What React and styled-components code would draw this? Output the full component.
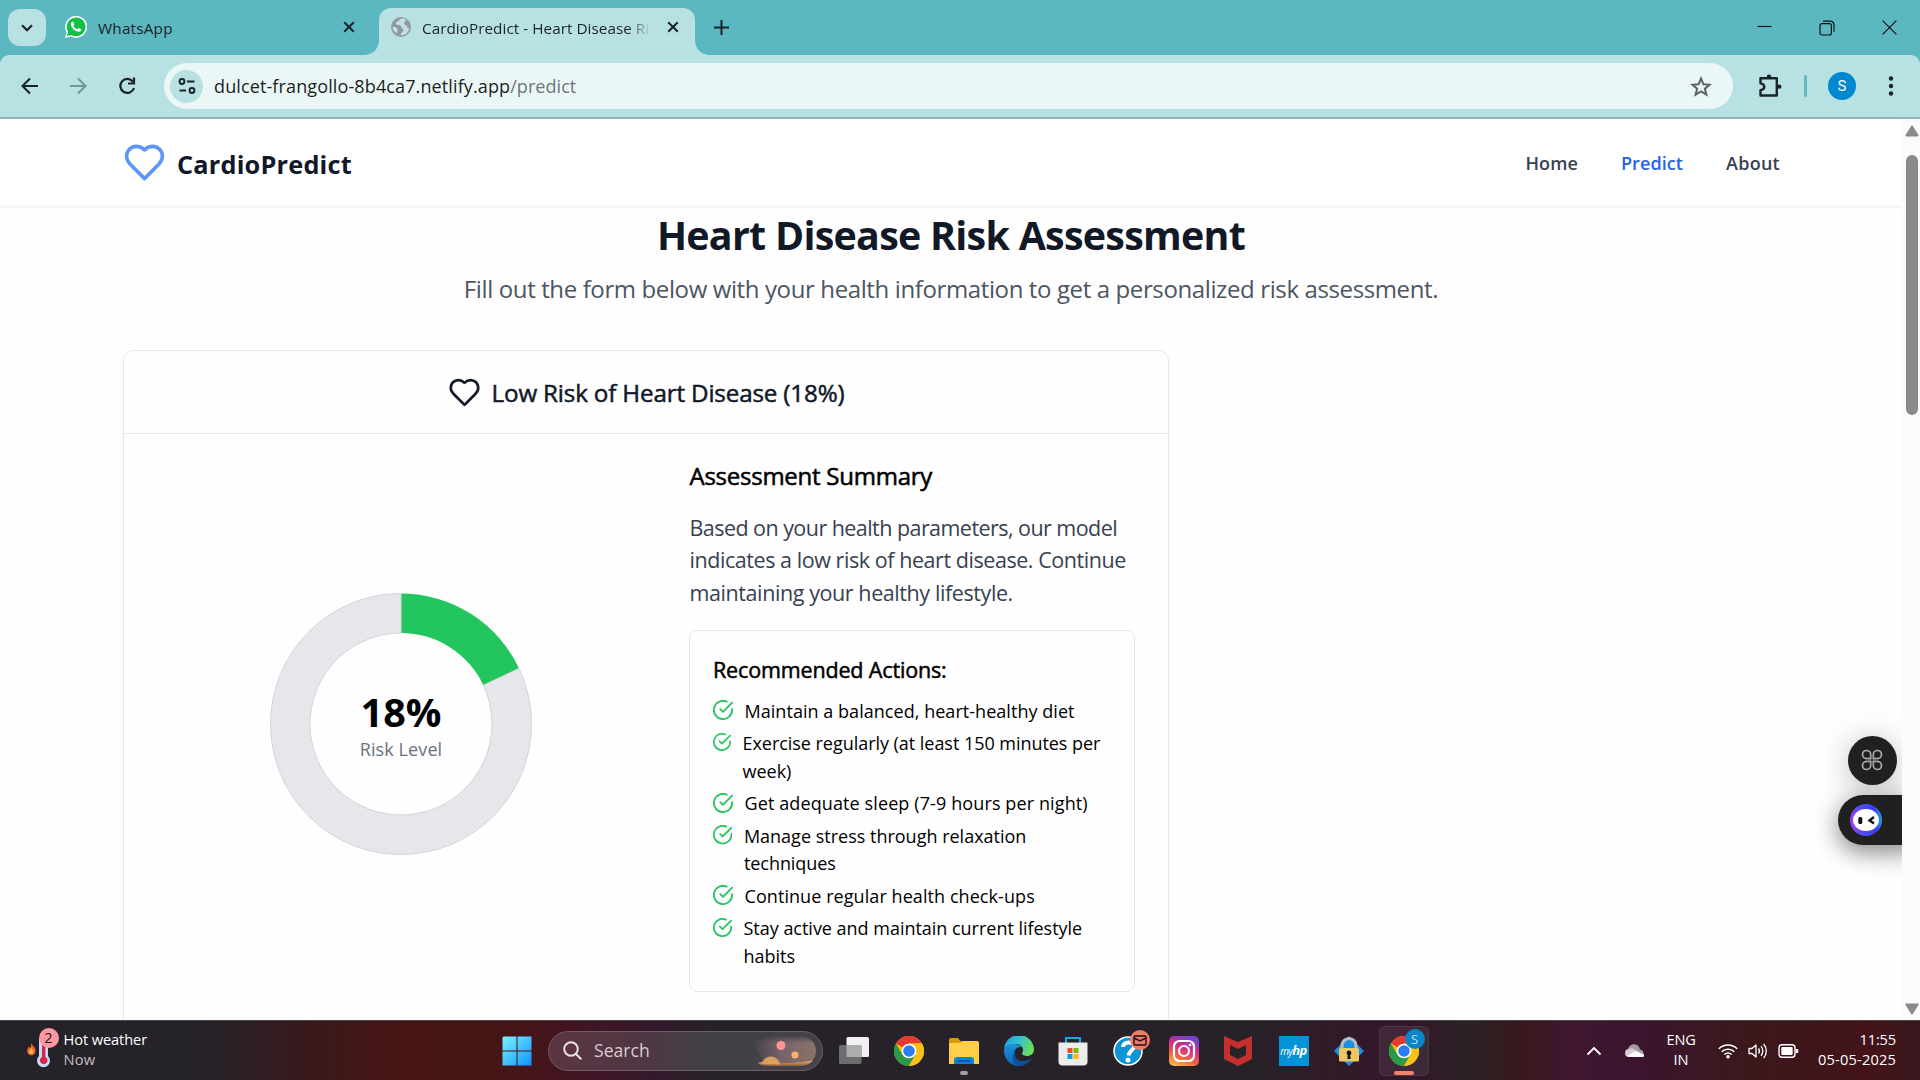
import React from 'react';
import styled, { createGlobalStyle } from 'styled-components';

const Global = createGlobalStyle`
  * { box-sizing: border-box; }
  body { margin: 0; background: #fff; overflow: hidden; font-family: "Open Sans", "Noto Sans", sans-serif; }
  h1, h2, h3, p, ul { margin: 0; padding: 0; font-weight: inherit; }
  ul { list-style: none; }
  svg { display: block; flex: none; }
`;

const Screen = styled.div`
  width: 1920px;
  height: 1080px;
  display: flex;
  flex-direction: column;
  overflow: hidden;
`;

const Text = styled.span`
  white-space: pre;
  letter-spacing: ${(p) => p.$track || 0}px;
`;

/* Browser chrome */
const TabStrip = styled.div`
  height: 55px;
  flex: none;
  display: flex;
  align-items: flex-end;
  background: #5bb8c1;
  padding-left: 8px;
  color: #1d2326;
`;
const TabSearch = styled.div`
  width: 38px;
  height: 37px;
  margin: 0 8px 9px 0;
  border-radius: 12px;
  background: #b8e1e4;
  display: grid;
  place-items: center;
`;
const Tab = styled.div`
  position: relative;
  width: ${(p) => p.$width}px;
  height: 47px;
  padding: 0 ${(p) => p.$end}px 9px ${(p) => p.$start}px;
  display: flex;
  align-items: center;
  border-radius: 12px 12px 0 0;
  background: ${(p) => (p.$active ? '#b8e1e4' : 'transparent')};
  &::before, &::after {
    content: '';
    display: ${(p) => (p.$active ? 'block' : 'none')};
    position: absolute;
    bottom: 0;
    width: 14px;
    height: 14px;
  }
  &::before { left: -14px; background: radial-gradient(circle at 0 0, transparent 13.5px, #b8e1e4 14px); }
  &::after { right: -14px; background: radial-gradient(circle at 100% 0, transparent 13.5px, #b8e1e4 14px); }
`;
const TabTitle = styled.div`
  flex: 1;
  min-width: 0;
  margin-left: 11px;
  margin-right: ${(p) => (p.$fade ? 16 : 21)}px;
  white-space: nowrap;
  font-size: 15.3px;
  line-height: 22px;
  padding-top: 2px;
  mask-image: ${(p) => (p.$fade ? 'linear-gradient(90deg, #000 205px, transparent 229px)' : 'none')};
`;
const NewTab = styled.div`
  width: 53px;
  height: 55px;
  display: grid;
  place-items: center;
`;
const WindowControls = styled.div`
  margin-left: auto;
  height: 55px;
  display: flex;
  align-items: center;
  gap: 47px;
  padding-right: 23px;
`;
const Toolbar = styled.div`
  height: 64px;
  flex: none;
  background: linear-gradient(#5bb8c1, #5bb8c1 8px, transparent 8px), #b8e1e4;
  display: flex;
`;
const ToolbarInner = styled.div`
  flex: 1;
  display: flex;
  align-items: center;
  padding: 0 21px;
  background: #b8e1e4;
  border-radius: 9px 9px 0 0;
  border-bottom: 2px solid #8eb5bb;
`;
const NavButtons = styled.div`
  display: flex;
  gap: 30px;
  margin-right: 27px;
`;
const Omnibox = styled.div`
  width: 1569px;
  height: 46px;
  border-radius: 23px;
  background: #ebf7f7;
  display: flex;
  align-items: center;
  padding: 0 21px 0 6px;
`;
const SiteInfo = styled.div`
  width: 33px;
  height: 33px;
  border-radius: 50%;
  background: #b8e1e4;
  display: grid;
  place-items: center;
  margin-right: 11px;
`;
const Url = styled.div`
  flex: 1;
  font-size: 18px;
  line-height: 24px;
  color: #1b1f22;
`;
const UrlPath = styled.span`
  color: #6b7579;
`;
const ToolbarTools = styled.div`
  display: flex;
  align-items: center;
  margin-left: 25px;
`;
const ToolbarDivider = styled.div`
  width: 3px;
  height: 22px;
  border-radius: 2px;
  background: #5bbbc1;
  margin: 0 21px 0 22px;
`;
const Avatar = styled.div`
  width: 28px;
  height: 28px;
  border-radius: 50%;
  background: #0288d1;
  color: #fff;
  font: 15px/28px Roboto, sans-serif;
  text-align: center;
  margin: 0 32px 0 0;
`;

/* Page */
const Viewport = styled.div`
  height: 901px;
  flex: none;
  display: flex;
  position: relative;
  overflow: hidden;
`;
const Page = styled.div`
  width: 1902px;
  overflow: hidden;
  background: #fefefe;
`;
const Header = styled.header`
  height: 87px;
  display: flex;
  align-items: center;
  padding: 0 122px 0 123px;
  background: #fff;
  box-shadow: 0 1px 3px rgba(0, 0, 0, 0.08);
`;
const Brand = styled.div`
  display: flex;
  align-items: center;
  gap: 11px;
  font-size: 25.3px;
  line-height: 34px;
  font-weight: 700;
  color: #111827;
`;
const BrandName = styled.div`
  padding-top: 3px;
`;
const Nav = styled.nav`
  margin-left: auto;
  display: flex;
  gap: 43px;
  font-size: 18px;
  font-weight: 600;
  line-height: 26px;
`;
const NavLink = styled(Text)`
  color: ${(p) => (p.$active ? '#2563eb' : '#374151')};
`;
const Intro = styled.div`
  padding-top: 4px;
  text-align: center;
`;
const Title = styled.h1`
  font-size: 39.4px;
  line-height: 50px;
  font-weight: 700;
  color: #111827;
`;
const Subtitle = styled.p`
  margin-top: 11px;
  font-size: 24px;
  line-height: 35px;
  color: #4b5563;
`;
const Card = styled.section`
  width: 1046px;
  height: 760px;
  margin: 44px 0 0 123px;
  border: 1px solid #e5e7eb;
  border-radius: 10px;
  background: #fefefe;
`;
const CardHeader = styled.div`
  height: 83px;
  display: flex;
  align-items: center;
  justify-content: center;
  gap: 11px;
  border-bottom: 1px solid #e5e7eb;
  font-size: 24.2px;
  color: #111827;
  -webkit-text-stroke: 0.5px #111827;
`;
const CardBody = styled.div`
  display: grid;
  grid-template-columns: 506px 446px;
  column-gap: 35px;
  padding: 24px;
`;
const ChartCell = styled.div`
  display: grid;
  place-items: center;
  padding-bottom: 2px;
`;
const ChartStack = styled.div`
  display: grid;
  place-items: center;
  > * { grid-area: 1 / 1; }
`;
const ChartLabel = styled.div`
  display: flex;
  flex-direction: column;
  align-items: center;
  padding-top: 5px;
`;
const ChartValue = styled.div`
  font-size: 39.6px;
  line-height: 44px;
  font-weight: 700;
  color: #000;
`;
const ChartCaption = styled.div`
  font-size: 18px;
  line-height: 30px;
  color: #6b7280;
`;
const Summary = styled.div`
  > h2, > p { padding-left: 0.5px; }
`;
const SummaryTitle = styled.h2`
  font-size: 24px;
  line-height: 35px;
  color: #000;
  -webkit-text-stroke: 0.55px #000;
`;
const SummaryText = styled.p`
  margin: 19px 0 21px;
  font-size: 21.5px;
  line-height: 32.4px;
  color: #374151;
`;
const Actions = styled.div`
  height: 362px;
  padding: 24px 22px 21px 23px;
  border: 1px solid #e5e7eb;
  border-radius: 8px;
`;
const ActionsTitle = styled.h3`
  margin-bottom: 12.5px;
  font-size: 21.5px;
  line-height: 30px;
  color: #000;
  -webkit-text-stroke: 0.5px #000;
`;
const ActionList = styled.ul`
  display: flex;
  flex-direction: column;
  gap: 5px;
`;
const ActionItem = styled.li`
  display: flex;
  align-items: flex-start;
  gap: 11.5px;
  font-size: 18px;
  line-height: 27.5px;
  color: #000;
  > svg { margin-top: 2.5px; }
`;
const Line = styled(Text)`
  display: block;
`;
const Scrollbar = styled.div`
  width: 18px;
  background: #fbfbfb;
  display: flex;
  flex-direction: column;
  align-items: center;
  padding: 6px 0 5px 2px;
`;
const Thumb = styled.div`
  width: 12px;
  height: 260px;
  border-radius: 6px;
  background: #8b8b8b;
  margin: 18px 0 auto;
`;
const FloatRound = styled.div`
  position: absolute;
  left: 1848px;
  top: 617px;
  width: 49px;
  height: 49px;
  padding-right: 1px;
  padding-bottom: 1px;
  border-radius: 50%;
  background: #202020;
  display: grid;
  place-items: center;
`;
const FloatClip = styled.div`
  position: absolute;
  left: 1770px;
  top: 540px;
  width: 132px;
  height: 260px;
  overflow: hidden;
`;
const FloatHalo = styled.div`
  position: absolute;
  left: 78px;
  top: 77px;
  width: 49px;
  height: 49px;
  border-radius: 50%;
  box-shadow: 0 4px 30px rgba(0, 0, 0, 0.25);
`;
const FloatPill = styled.div`
  position: absolute;
  left: 68px;
  top: 136px;
  width: 80px;
  height: 50px;
  padding: 9px 12px;
  border-radius: 25px 0 0 25px;
  background: #202020;
  box-shadow: 0 8px 22px rgba(0, 0, 0, 0.4), 0 0 34px rgba(0, 0, 0, 0.12);
`;

/* Taskbar */
const Taskbar = styled.div`
  flex: 1;
  display: flex;
  align-items: center;
  padding-bottom: 2px;
  border-top: 1px solid #49434a;
  color: #fff;
  font-size: 14.6px;
  line-height: 20px;
  background: linear-gradient(90deg, #26222a 0, #26222a 200px, #38191b 310px, #471513 400px, #451612 470px,
    #44141d 550px, #3f1627 600px, #33192a 650px, #272229 710px, #262228 1230px, #301b28 1330px, #33172a 1400px,
    #2a2226 1470px, #38181c 1520px, #3f1730 1570px, #3b142e 1640px, #3a1726 1690px, #3b181c 1740px, #3d161b 1800px, #44131a 1870px, #38181d 1920px);
`;
const Weather = styled.div`
  width: 489px;
  display: flex;
  align-items: center;
  padding-left: 24px;
`;
const TwoLines = styled.div`
  display: flex;
  flex-direction: column;
  align-items: ${(p) => p.$align || 'flex-start'};
  padding-bottom: 4px;
`;
const Slot = styled.div`
  position: relative;
  width: 55px;
  height: 59px;
  display: grid;
  place-items: center;
  padding-right: ${(p) => p.$nudge || 0}px;
`;
const ActiveTile = styled.div`
  width: 50px;
  height: 50px;
  border-radius: 6px;
  border: 1px solid rgba(255, 255, 255, 0.07);
  background: rgba(255, 255, 255, 0.07);
  display: grid;
  place-items: center;
`;
const RunMark = styled.div`
  position: absolute;
  left: 50%;
  bottom: 5px;
  width: ${(p) => p.$width}px;
  height: 4px;
  transform: translateX(-50%);
  border-radius: 2px;
  background: ${(p) => p.$color};
`;
const TileBadge = styled.div`
  position: absolute;
  left: ${(p) => p.$x}px;
  top: ${(p) => p.$y}px;
  width: 20px;
  height: 20px;
  border-radius: 50%;
  background: ${(p) => p.$color};
  color: ${(p) => p.$ink};
  font-size: ${(p) => p.$size || 12}px;
  line-height: 20px;
  display: grid;
  place-items: center;
`;
const WeatherIcon = styled.div`
  position: relative;
  width: 39.5px;
  height: 42px;
`;
const Muted = styled(Text)`
  color: #c3bfc3;
`;
const SearchBox = styled.div`
  width: 275px;
  height: 40px;
  margin: 0 3px 0 4px;
  border-radius: 20px;
  border: 1px solid #6b5c66;
  background: linear-gradient(90deg, #5b3541, #4f3743 35%, #414046 60%, #444347);
  display: flex;
  align-items: center;
  padding: 0 3px 0 14px;
  overflow: hidden;
`;
const SearchLabel = styled.div`
  flex: 1;
  margin-left: 12px;
  padding-bottom: 1px;
  font-size: 17.6px;
  color: #d6ccd2;
`;
const HpTile = styled.div`
  width: 30px;
  height: 30px;
  background: #0294d6;
  color: #fff;
  font-style: italic;
  font-size: 10px;
  line-height: 28px;
  text-align: center;
  letter-spacing: -0.6px;
  white-space: nowrap;
  b { font-size: 13px; }
`;
const Tray = styled.div`
  flex: 1;
  display: flex;
  align-items: center;
  justify-content: flex-end;
  padding-right: 24px;
`;
const Lang = styled(TwoLines)`
  width: 40px;
  margin: 0 17px 0 15px;
`;
const TrayIcons = styled.div`
  display: flex;
  gap: 10px;
  margin-right: 19px;
`;

const Heart = ({ size, color }) => (
  <svg width={size} height={size} viewBox="0 0 24 24" fill="none" stroke={color} strokeWidth="2" strokeLinecap="round" strokeLinejoin="round">
    <path d="M19 14c1.49-1.46 3-3.21 3-5.5A5.5 5.5 0 0 0 16.5 3c-1.76 0-3 .5-4.5 2-1.5-1.5-2.74-2-4.5-2A5.5 5.5 0 0 0 2 8.5c0 2.3 1.5 4.05 3 5.5l7 7Z" />
  </svg>
);
const Check = ({ size }) => (
  <svg width={size} height={size} viewBox="1 1 22 22" fill="none" stroke="#22c55e" strokeWidth="2" strokeLinecap="round" strokeLinejoin="round">
    <path d="M22 11.08V12a10 10 0 1 1-5.93-9.14" />
    <path d="m9 11 3 3L22 4" />
  </svg>
);
const Cross = () => (
  <svg width="12" height="12" viewBox="0 0 12 12" stroke="#1b2326" strokeWidth="2">
    <path d="M1.2 1.2l9.6 9.6M10.8 1.2l-9.6 9.6" />
  </svg>
);

const polar = (r, deg) => {
  const a = ((deg - 90) * Math.PI) / 180;
  return `${132 + r * Math.cos(a)} ${132 + r * Math.sin(a)}`;
};
const arc = (from, to) => {
  const large = to - from > 180 ? 1 : 0;
  return `M${polar(130.5, from)}A130.5 130.5 0 ${large} 1 ${polar(130.5, to)}L${polar(91, to)}A91 91 0 ${large} 0 ${polar(91, from)}Z`;
};
const Donut = ({ value }) => {
  const angle = value * 3.6;
  return (
    <svg width="264" height="264" viewBox="0 0 264 264">
      <path d={arc(0, angle)} fill="#22c55e" />
      <path d={arc(angle, 360)} fill="#e5e7eb" stroke="#d1d5db" strokeWidth="1" />
    </svg>
  );
};

const ChromeLogo = () => (
  <svg width="30" height="30" viewBox="0 0 30 30">
    <circle cx="15" cy="15" r="15" fill="#fbc116" />
    <path d="M15 15L2 7.5A15 15 0 0 1 28 7.5L15 7.5Z" fill="#e33b2e" />
    <path d="M2 7.5A15 15 0 0 0 15 30L21.5 18.75 15 15 8.5 18.75Z" fill="#2a9a48" />
    <path d="M28 7.5A15 15 0 0 1 15 30L21.5 18.75 21 11 15 7.5Z" fill="#fbc116" />
    <circle cx="15" cy="15" r="7.3" fill="#fff" />
    <circle cx="15" cy="15" r="5.8" fill="#2b7cf0" />
  </svg>
);

const actions = [
  { size: 20, lines: [['Maintain a balanced, heart-healthy diet', 0.04]] },
  { size: 18, lines: [['Exercise regularly (at least 150 minutes per', -0.04], ['week)', 0]] },
  { size: 20, lines: [['Get adequate sleep (7-9 hours per night)', 0.11]] },
  { size: 19.4, lines: [['Manage stress through relaxation', 0], ['techniques', -0.05]] },
  { size: 20, lines: [['Continue regular health check-ups', 0.07]] },
  { size: 19, lines: [['Stay active and maintain current lifestyle', -0.02], ['habits', 0]] },
];

export default function App() {
  return (
    <Screen>
      <Global />
      <TabStrip>
        <TabSearch>
          <svg width="12" height="8" viewBox="0 0 12 8" fill="none" stroke="#1b2326" strokeWidth="2.2"><path d="M1 1.2l5 5 5-5" /></svg>
        </TabSearch>
        <Tab $width={325} $start={11} $end={24}>
          <svg width="22" height="22" viewBox="0 0 22 22">
            <path d="M0 22l1.6-5.6A11 11 0 1 1 5.6 20.4Z" fill="#fff" />
            <path d="M1.9 20.1l1.2-4.3a9.4 9.4 0 1 1 3.3 3.2Z" fill="#12c143" />
            <path d="M7.6 5.6c-.5 0-1.7 1-1.7 2.7 0 3.2 4.3 7.5 7.7 7.5 1.5 0 2.7-1 2.7-2.3 0-.5-2.200-1.600-2.700-1.600-.5 0-1 1.300-1.500 1.300-1 0-3.700-2.500-3.700-3.400 0-.4.9-.9.9-1.400 0-.5-.9-2.800-1.700-2.800Z" fill="#fff" />
          </svg>
          <TabTitle><Text $track={0.2}>WhatsApp</Text></TabTitle>
          <Cross />
        </Tab>
        <Tab $width={316} $start={12} $end={16} $active>
          <svg width="20" height="20" viewBox="0 0 20 20">
            <circle cx="10" cy="10" r="10" fill="#8e9aa0" />
            <path d="M11 1.5c-3 .5-2.5 2.5-4.5 3C4 5 5 8 7 8c1.5 0 3.5.5 3.5 2.5 0 1.5 2 1 2 2.5 0 2-2.5 2.5-3 5.3 4 .5 8-2.5 8.7-6.8-1.5-.2-2.200-1-2.200-2.500 0-1.500-3-.5-3-2.500s2.200-2 2-3.800C14 1.800 12.500 1.300 11 1.500Z" fill="#c3dfe2" />
            <path d="M1.7 9.5c2.5.5 5.3 1.5 4.8 3.5-.4 1.300.5 2.300-.5 3.300C3 15 1.500 12.500 1.700 9.500Z" fill="#c3dfe2" />
          </svg>
          <TabTitle $fade><Text $track={0.03}>CardioPredict - Heart Disease Ri</Text></TabTitle>
          <Cross />
        </Tab>
        <NewTab>
          <svg width="15" height="15" viewBox="0 0 15 15" stroke="#1b2326" strokeWidth="2"><path d="M7.5 0v15M0 7.5h15" /></svg>
        </NewTab>
        <WindowControls>
          <svg width="15" height="15" viewBox="0 0 15 15" stroke="#111" strokeWidth="1.2"><path d="M.5 6.5h14" /></svg>
          <svg width="16" height="16" viewBox="0 0 16 16" fill="none" stroke="#111" strokeWidth="1.2"><rect x="1" y="3.6" width="11.4" height="11.4" rx="2" /><path d="M4 1.2h7.5a3.5 3.5 0 0 1 3.5 3.5v7" /></svg>
          <svg width="15" height="15" viewBox="0 0 15 15" stroke="#111" strokeWidth="1.2"><path d="M.6.6l13.8 13.8M14.4.6L.6 14.4" /></svg>
        </WindowControls>
      </TabStrip>
      <Toolbar>
        <ToolbarInner>
          <NavButtons>
            <svg width="18" height="18" viewBox="0 0 18 18" fill="none" stroke="#1b2326" strokeWidth="2.1"><path d="M17 9H2M9 1.5L1.5 9 9 16.5" /></svg>
            <svg width="18" height="18" viewBox="0 0 18 18" fill="none" stroke="#6f979b" strokeWidth="2.1"><path d="M1 9h15M9 1.5L16.5 9 9 16.5" /></svg>
            <svg width="20" height="18" viewBox="0 0 20 18" fill="none" stroke="#1b2326" strokeWidth="2.2"><path d="M16 4.8A7 7 0 1 0 17 11M17 .6v5.9h-6" /></svg>
          </NavButtons>
          <Omnibox>
            <SiteInfo>
              <svg width="18" height="16" viewBox="0 0 18 16" fill="none" stroke="#1b2326" strokeWidth="2"><circle cx="4" cy="3.5" r="2.4" /><path d="M9 3.5h7.5M1.5 12.5H8" /><circle cx="14" cy="12.5" r="2.4" /></svg>
            </SiteInfo>
            <Url><Text $track={0.12}>dulcet-frangollo-8b4ca7.netlify.app</Text><UrlPath><Text $track={0.05}>/predict</Text></UrlPath></Url>
            <svg width="22" height="21" viewBox="0 0 22 21" fill="none" stroke="#5a6468" strokeWidth="2"><path d="M11 2.5l2.4 5.7 6.2.5-4.7 4 1.5 6L11 15.5l-5.4 3.2 1.5-6-4.7-4 6.2-.5Z" /></svg>
          </Omnibox>
          <ToolbarTools>
            <svg width="24" height="24" viewBox="0 0 24 24" fill="none" stroke="#1b2326" strokeWidth="2.4" strokeLinejoin="round">
              <path d="M2.5 4.2h16.3v17.3H2.5v-5.3c5-.6 5-6.2 0-6.8Z" /><circle cx="11" cy="2.7" r="1.4" fill="#1b2326" strokeWidth="1.6" /><circle cx="21.3" cy="12.6" r="1.4" fill="#1b2326" strokeWidth="1.6" />
            </svg>
            <ToolbarDivider />
            <Avatar>S</Avatar>
            <svg width="6" height="20" viewBox="0 0 6 20" fill="#1b2326"><circle cx="3" cy="2.5" r="2.2" /><circle cx="3" cy="10" r="2.2" /><circle cx="3" cy="17.5" r="2.2" /></svg>
          </ToolbarTools>
        </ToolbarInner>
      </Toolbar>
      <Viewport>
        <Page>
          <Header>
            <Brand><Heart size={43} color="#5b96f8" /><BrandName><Text $track={0.2}>CardioPredict</Text></BrandName></Brand>
            <Nav>
              <NavLink $track={0.1}>Home</NavLink>
              <NavLink $track={0.1} $active>Predict</NavLink>
              <NavLink $track={0.25}>About</NavLink>
            </Nav>
          </Header>
          <Intro>
            <Title><Text $track={-0.73}>Heart Disease Risk Assessment</Text></Title>
            <Subtitle><Text $track={-0.38}>Fill out the form below with your health information to get a personalized risk assessment.</Text></Subtitle>
          </Intro>
          <Card>
            <CardHeader><Heart size={33} color="#111827" /><Text $track={-0.16}>Low Risk of Heart Disease (18%)</Text></CardHeader>
            <CardBody>
              <ChartCell>
                <ChartStack>
                  <Donut value={18} />
                  <ChartLabel>
                    <ChartValue>18%</ChartValue>
                    <ChartCaption><Text $track={0.1}>Risk Level</Text></ChartCaption>
                  </ChartLabel>
                </ChartStack>
              </ChartCell>
              <Summary>
                <SummaryTitle><Text $track={-0.25}>Assessment Summary</Text></SummaryTitle>
                <SummaryText>
                  <Line $track={-0.55}>Based on your health parameters, our model</Line>
                  <Line $track={-0.44}>indicates a low risk of heart disease. Continue</Line>
                  <Line $track={-0.41}>maintaining your healthy lifestyle.</Line>
                </SummaryText>
                <Actions>
                  <ActionsTitle><Text $track={-0.15}>Recommended Actions:</Text></ActionsTitle>
                  <ActionList>
                    {actions.map((a) => (
                      <ActionItem key={a.lines[0][0]}>
                        <Check size={a.size} />
                        <div>{a.lines.map(([text, track]) => <Line key={text} $track={track}>{text}</Line>)}</div>
                      </ActionItem>
                    ))}
                  </ActionList>
                </Actions>
              </Summary>
            </CardBody>
          </Card>
        </Page>
        <Scrollbar>
          <svg width="14" height="12" viewBox="0 0 14 12"><path d="M7 1.5L12.6 10.5H1.4Z" fill="#8b8b8b" stroke="#8b8b8b" strokeWidth="2" strokeLinejoin="round" /></svg>
          <Thumb />
          <svg width="14" height="12" viewBox="0 0 14 12"><path d="M7 10.5L12.6 1.5H1.4Z" fill="#8b8b8b" stroke="#8b8b8b" strokeWidth="2" strokeLinejoin="round" /></svg>
        </Scrollbar>
        <FloatClip>
          <FloatHalo />
          <FloatPill>
            <svg width="32" height="32" viewBox="0 0 32 32">
              <defs><linearGradient id="ring" x1="0" y1=".6" x2="1" y2=".5"><stop offset="0" stopColor="#a23cf0" /><stop offset=".4" stopColor="#4a4df5" /><stop offset=".8" stopColor="#3a3df0" /><stop offset="1" stopColor="#1fa5e0" /></linearGradient></defs>
              <circle cx="16" cy="16" r="16" fill="url(#ring)" />
              <ellipse cx="16" cy="16" rx="13" ry="11" fill="#fff" />
              <rect x="8.3" y="13" width="4" height="7" rx="1.5" fill="#111" />
              <path d="M24 13l-4.5 3.5 4.5 3" fill="none" stroke="#111" strokeWidth="2.4" />
            </svg>
          </FloatPill>
        </FloatClip>
        <FloatRound>
          <svg width="22" height="22" viewBox="0 0 22 22" fill="none" stroke="#a9a9ae" strokeWidth="1.7">
            <path d="M9.7 9.7H5.5a4.1 4.1 0 1 1 4.2-4.2Z" /><path d="M12.3 9.7h4.2a4.1 4.1 0 1 0-4.2-4.2Z" /><path d="M9.7 12.3H5.5a4.1 4.1 0 1 0 4.2 4.2Z" /><path d="M12.3 12.3h4.2a4.1 4.1 0 1 1-4.2 4.2Z" />
          </svg>
        </FloatRound>
      </Viewport>
      <Taskbar>
        <Weather>
          <WeatherIcon>
            <svg width="30" height="42" viewBox="0 0 30 42">
              <path d="M7 13c1 3 5 4 4.5 8a4.2 4.2 0 0 1-8.400 0c0-2 1.200-2.500 1.400-4.500 1 .5 1.300 1 1.500 1.800C7.200 17 7 15 7 13Z" fill="#f0662a" />
              <path d="M7.3 18c1 2 2.2 2.500 2 4.200a2.200 2.200 0 0 1-4.200 0c0-1.500 1.800-2.200 2.200-4.200Z" fill="#ffc44d" />
              <path d="M15 8h9v18a6.5 6.5 0 1 1-9 0Z" fill="#c5dcf7" />
              <path d="M18 12h3.4v15a3.8 3.8 0 1 1-3.400 0Z" fill="#dd2347" />
            </svg>
            <TileBadge $x={14.5} $y={-1.5} $color="#ff97a3" $ink="#1c1418" $size={14.5}>2</TileBadge>
          </WeatherIcon>
          <TwoLines>
            <Text $track={-0.08}>Hot weather</Text>
            <Muted $track={0.2}>Now</Muted>
          </TwoLines>
        </Weather>
        <Slot>
          <svg width="30" height="30" viewBox="0 0 30 30">
            <defs><linearGradient id="win" x1="0" y1="0" x2="1" y2="1"><stop offset="0" stopColor="#7df3ff" /><stop offset="1" stopColor="#0a93fb" /></linearGradient></defs>
            <path d="M1.5.5H14.5V14.5H.5V1.5ZM15.5.5H29.5V14.5H15.5ZM.5 15.5H14.5V29.5H.5ZM15.5 15.5H29.5V29.5H15.5Z" fill="url(#win)" />
          </svg>
        </Slot>
        <SearchBox>
          <svg width="19" height="19" viewBox="0 0 19 19" fill="none" stroke="#e8e3e6" strokeWidth="2" strokeLinecap="round"><circle cx="8" cy="8" r="6.8" /><path d="M13 13l4.7 4.7" /></svg>
          <SearchLabel>Search</SearchLabel>
          <svg width="66" height="32" viewBox="0 0 66 32">
            <defs>
              <linearGradient id="sky" x1="0" x2="1"><stop offset="0" stopColor="#77636c" stopOpacity="0" /><stop offset=".45" stopColor="#77636c" /><stop offset="1" stopColor="#8c7266" /></linearGradient>
              <linearGradient id="skyFade" x1="0" y1="0" x2="0" y2="1"><stop offset="0" stopColor="#434146" /><stop offset=".5" stopColor="#434146" stopOpacity="0" /></linearGradient>
              <linearGradient id="dune" x1="0" y1="0" x2="0" y2="1"><stop offset="0" stopColor="#efb27a" /><stop offset="1" stopColor="#8a5a3c" /></linearGradient>
            </defs>
            <path d="M0 8C10 2 25 1 48 1a15 15 0 0 1 0 30H20C10 29 8 22 0 8Z" fill="url(#sky)" />
            <path d="M0 0h66v16H0Z" fill="url(#skyFade)" />
            <path d="M5 27.5c8-1 14 0 20 .5 12 1 24-1 35-2.500-4 4-8 5.500-13 5.500H14c-4 0-8-1.500-9-3.500Z" fill="url(#dune)" />
            <path d="M9 29c0-4 4-7 9-7.500 4 0 8 3 9.500 8Z" fill="#dba05f" />
            <circle cx="28" cy="10.5" r="4.5" fill="#ff9593" /><circle cx="42" cy="20" r="3.5" fill="#f5b26c" />
          </svg>
        </SearchBox>
        <Slot>
          <svg width="30" height="30" viewBox="0 0 30 30"><rect x="7.5" y="1" width="22.5" height="20" rx="1.5" fill="#f1f1f1" /><rect x="0" y="9" width="22.5" height="19" rx="1.5" fill="#6d6d6e" /><path d="M7.5 9h15v12h-15Z" fill="#adadad" /></svg>
        </Slot>
        <Slot><ChromeLogo /></Slot>
        <Slot>
          <svg width="30" height="30" viewBox="0 0 30 30"><path d="M0 4a2 2 0 0 1 2-2h7l3 3.5h16a2 2 0 0 1 2 2V12H0Z" fill="#dc9a08" /><path d="M0 7h11l2-2h15a2 2 0 0 1 2 2v21H0Z" fill="#ffcf4a" /><path d="M5 28v-4a3 3 0 0 1 3-3h14a3 3 0 0 1 3 3v4Z" fill="#1181cf" /><path d="M9 25h12" stroke="#0a4f94" strokeWidth="1.5" /></svg>
          <RunMark $width={8} $color="#a19fa3" />
        </Slot>
        <Slot>
          <svg width="30" height="30" viewBox="0 0 30 30">
            <defs>
              <linearGradient id="edgeA" x1="0" y1=".2" x2="1" y2=".5"><stop offset="0" stopColor="#1f9fe0" /><stop offset=".5" stopColor="#35c2cf" /><stop offset="1" stopColor="#6be04f" /></linearGradient>
              <linearGradient id="edgeB" x1="0" y1="0" x2="0" y2="1"><stop offset="0" stopColor="#1b93dd" /><stop offset="1" stopColor="#0d62b8" /></linearGradient>
            </defs>
            <path d="M0 15A15 15 0 0 1 30 13c0 5-3.5 7-7 7-3 0-5-1-5-2.5 0-1 1-1.5 1-3.5 0-4-4-6-8-6C5 8 0 11 0 15Z" fill="url(#edgeA)" />
            <path d="M0 15C1 10 5 8 10 8c3 0 6 1 7.5 3C13 10.5 10 13.5 10 18c0 6 4 10 9 11.5A15 15 0 0 1 0 15Z" fill="url(#edgeB)" />
            <path d="M12 14c-3 6 1 12 8 11 3-.3 6-1.5 8-3-2.5 5-8 8-13.5 8C9 28 6 20 12 14Z" fill="#0f4f98" />
          </svg>
        </Slot>
        <Slot $nudge={1}>
          <svg width="30" height="30" viewBox="0 0 30 30"><path d="M8 7V2h14v5" fill="none" stroke="#1ea4e4" strokeWidth="2.2" /><path d="M.5 6.5h29v19a4 4 0 0 1-4 4h-21a4 4 0 0 1-4-4Z" fill="#ececec" /><path d="M9.5 12h5v5h-5Z" fill="#ee4f28" /><path d="M15.5 12h5v5h-5Z" fill="#7db900" /><path d="M9.5 18h5v5h-5Z" fill="#05a0ec" /><path d="M15.5 18h5v5h-5Z" fill="#fdb700" /></svg>
        </Slot>
        <Slot $nudge={1}>
          <svg width="30" height="30" viewBox="0 0 30 30"><circle cx="15" cy="15" r="14" fill="#0b95d8" stroke="#fff" strokeWidth="1.5" /><path d="M10 11c0-6 11-6 11-.5 0 4-5 4-5.5 9" fill="none" stroke="#fff" strokeWidth="4" /><circle cx="15" cy="24" r="2.5" fill="#fff" /></svg>
          <TileBadge $x={28.5} $y={9} $color="#f4796b" $ink="#1a1010">
            <svg width="14" height="11" viewBox="0 0 14 11" fill="none" stroke="#1a1010" strokeWidth="1.4"><rect x="1" y="1" width="12" height="9" rx="1" /><path d="M1 3l6 3 6-3" /></svg>
          </TileBadge>
        </Slot>
        <Slot>
          <svg width="30" height="30" viewBox="0 0 30 30">
            <defs><linearGradient id="ig" x1=".1" y1="1" x2=".5" y2="0"><stop offset="0" stopColor="#fdc04f" /><stop offset=".35" stopColor="#f0653c" /><stop offset=".65" stopColor="#d62e86" /><stop offset="1" stopColor="#7a3fcd" /></linearGradient></defs>
            <rect width="30" height="30" rx="5" fill="url(#ig)" /><g fill="none" stroke="#fff" strokeWidth="2.2"><rect x="5" y="5" width="20" height="20" rx="5.5" /><circle cx="15" cy="15" r="5" /></g><circle cx="21" cy="9" r="1.3" fill="#fff" />
          </svg>
        </Slot>
        <Slot $nudge={1}>
          <svg width="28" height="30" viewBox="0 0 28 30"><path d="M0 0l14 6L28 0v23l-14 7L0 23Z" fill="#c5302f" /><path d="M6 9l8 4 8-4v10l-8 4-8-4Z" fill="#262228" /></svg>
        </Slot>
        <Slot><HpTile>my<b>hp</b></HpTile></Slot>
        <Slot>
          <svg width="30" height="30" viewBox="0 0 30 30"><path d="M15 0l15 15-15 15L0 15Z" fill="#1b8fe0" /><path d="M8 13V9.5a7 7 0 0 1 14 0V13" fill="none" stroke="#b9bcc0" strokeWidth="3.2" /><rect x="5" y="12" width="20" height="13.5" rx="1.5" fill="#eec765" /><circle cx="15" cy="17" r="2.4" fill="#1a1410" /><path d="M14 17h2l.7 6h-3.4Z" fill="#1a1410" /></svg>
        </Slot>
        <Slot>
          <ActiveTile><ChromeLogo /></ActiveTile>
          <TileBadge $x={28.5} $y={8} $color="#0a86c8" $ink="#bfe0f2" $size={13}>S</TileBadge>
          <RunMark $width={20} $color="#f4836b" />
        </Slot>
        <Tray>
          <svg width="16" height="10" viewBox="0 0 16 10" fill="none" stroke="#fff" strokeWidth="1.8"><path d="M1.5 8.5L8 2l6.5 6.5" /></svg>
          <svg width="44" height="14" viewBox="0 0 44 14"><path d="M26 7a6 6 0 0 1 12-1.5c3 .3 4 3 3.5 5Z" fill="#a79aa5" /><path d="M27 13a4 4 0 0 1 0-8c2-1 5-.5 6.5 1.5l6 3c3 0 4 3.5.5 3.5Z" fill="#d6cdd4" /><path d="M25 12l9-5 8 4c0 1.5-1 2-2 2H27Z" fill="#fff" /></svg>
          <Lang $align="center"><Text $track={-0.24}>ENG</Text><Text>IN</Text></Lang>
          <TrayIcons>
            <svg width="20" height="16" viewBox="0 0 20 16" fill="none" stroke="#fff" strokeWidth="1.5"><path d="M.8 5.8a13 13 0 0 1 18.4 0M3.6 8.8a9 9 0 0 1 12.8 0M6.4 11.6a5 5 0 0 1 7.2 0" /><circle cx="10" cy="13.7" r="1.8" fill="#fff" stroke="none" /></svg>
            <svg width="20" height="16" viewBox="0 0 20 16" fill="none" stroke="#fff" strokeWidth="1.3"><path d="M1 5.5h3L8 2v12l-4-3.5H1Z" strokeLinejoin="round" /><path d="M10.5 5.5a4 4 0 0 1 0 5M13 3.3a7 7 0 0 1 0 9.4M15.6 1a10.5 10.5 0 0 1 0 14" /></svg>
            <svg width="21" height="16" viewBox="0 0 21 16" fill="none" stroke="#fff" strokeWidth="1.4"><rect x="1" y="1.8" width="16" height="12.4" rx="3" /><rect x="3.3" y="4" width="11.4" height="8" rx="1" fill="#fff" stroke="none" /><path d="M19 6v4" strokeWidth="2.4" /></svg>
          </TrayIcons>
          <TwoLines $align="flex-end"><Text $track={-0.14}>11:55</Text><Text $track={0.18}>05-05-2025</Text></TwoLines>
        </Tray>
      </Taskbar>
    </Screen>
  );
}
